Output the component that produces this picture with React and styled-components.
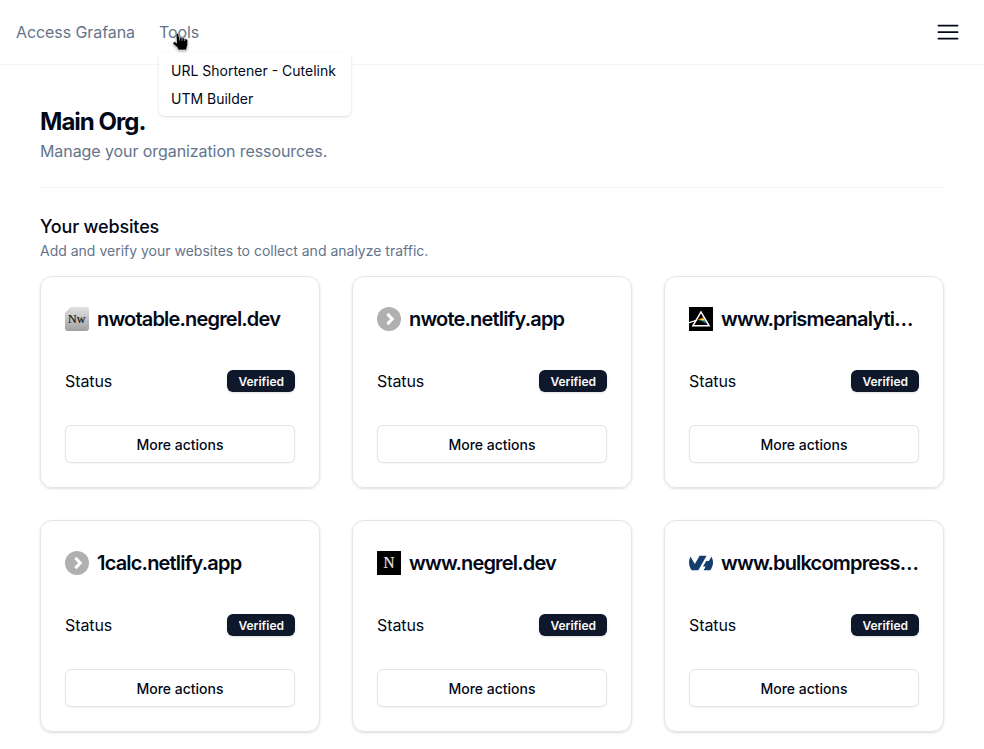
import React from "react";
import styled, { createGlobalStyle } from "styled-components";
import { SiOvh } from "react-icons/si";

const GlobalStyle = createGlobalStyle`
  *, *::before, *::after { box-sizing: border-box; }
  body {
    margin: 0;
    background: #fff;
    color: #020817;
    font-family: Inter, "Liberation Sans", sans-serif;
    font-size: 16px;
    line-height: 24px;
    letter-spacing: -0.08px;
  }
  h1, h2, h3, p { margin: 0; }
`;

const Header = styled.header`
  display: flex;
  align-items: center;
  justify-content: space-between;
  height: 65px;
  padding: 0 22px 0 16px;
  border-bottom: 1px solid #f1f5f9;
`;

const Nav = styled.nav`
  display: flex;
  gap: 24px;
  color: #64748b;
`;

const NavItem = styled.div`
  position: relative;
  cursor: pointer;
`;

const Menu = styled.div`
  position: absolute;
  z-index: 1;
  top: 32px;
  left: 0;
  width: 192px;
  padding: 5px 4px 3px;
  border-radius: 6px;
  background: #fff;
  color: #020817;
  box-shadow: 0 1px 3px rgba(0, 0, 0, 0.12), 0 1px 2px -1px rgba(0, 0, 0, 0.1);
`;

const MenuItem = styled.div`
  padding: 4px 8px;
  font-size: 14px;
  line-height: 20px;
  letter-spacing: 0;
  white-space: nowrap;
`;

const Pointer = styled.svg`
  position: absolute;
  z-index: 2;
  left: 13px;
  top: 12px;
  width: 18px;
  height: 20px;
  filter: drop-shadow(0 1px 1px rgba(0, 0, 0, 0.35));
`;

const MenuButton = styled.button`
  display: flex;
  padding: 0;
  border: 0;
  background: none;
  color: #020817;
`;

const Main = styled.main`
  padding: 41px 40px 40px;
`;

const PageTitle = styled.h1`
  font-size: 24px;
  line-height: 32px;
  font-weight: 700;
  letter-spacing: -0.98px;
`;

const PageIntro = styled.p`
  margin-top: 1px;
  color: #64748b;
`;

const Divider = styled.div`
  height: 1px;
  margin: 24px 0 25px;
  background: #f1f5f9;
`;

const SectionTitle = styled.h2`
  font-size: 18px;
  line-height: 28px;
  font-weight: 500;
  letter-spacing: -0.16px;
`;

const SectionIntro = styled.p`
  font-size: 14px;
  line-height: 20px;
  letter-spacing: 0;
  color: #64748b;
`;

const CardGrid = styled.section`
  display: grid;
  grid-template-columns: repeat(3, minmax(0, 1fr));
  gap: 32px;
  margin-top: 15px;
`;

const Card = styled.article`
  display: flex;
  flex-direction: column;
  height: 212px;
  padding: 24px;
  border: 1px solid #e4e4e7;
  border-radius: 12px;
  box-shadow: 0 1px 3px rgba(0, 0, 0, 0.1), 0 1px 2px -1px rgba(0, 0, 0, 0.1);
`;

const CardHeading = styled.div`
  display: flex;
  align-items: center;
  gap: 8px;
  height: 36px;

  svg { flex: none; }
`;

const Domain = styled.h3`
  white-space: nowrap;
  font-size: 20px;
  line-height: 28px;
  font-weight: 600;
  letter-spacing: -0.82px;
`;

const StatusRow = styled.div`
  display: flex;
  align-items: center;
  justify-content: space-between;
  margin-top: 32px;
`;

const Badge = styled.span`
  padding: 4px 11px 2px;
  border-radius: 6px;
  background: #0f172a;
  color: #f8fafc;
  font-size: 12px;
  line-height: 16px;
  font-weight: 600;
  letter-spacing: 0;
  box-shadow: 0 1px 3px rgba(0, 0, 0, 0.1), 0 1px 2px -1px rgba(0, 0, 0, 0.1);
`;

const ActionButton = styled.button`
  height: 38px;
  margin-top: auto;
  padding: 2px 0 0;
  border: 1px solid #e4e4e7;
  border-radius: 6px;
  background: #fff;
  color: #020817;
  font: 500 14px/20px Inter, "Liberation Sans", sans-serif;
  box-shadow: 0 1px 2px rgba(0, 0, 0, 0.05);
`;

const LogoText = styled.text`
  font-family: "Liberation Serif", serif;
  font-weight: 400;
  letter-spacing: 0;
  text-anchor: middle;
`;

const NwotableLogo = () => (
  <svg width="24" height="24" viewBox="0 0 24 24">
    <defs>
      <linearGradient id="paper" x1="0" y1="0" x2="0" y2="1">
        <stop offset="0" stopColor="#e2e2e2" />
        <stop offset="1" stopColor="#a0a0a0" />
      </linearGradient>
    </defs>
    <path d="M6 0H21Q24 0 24 3V21Q24 24 21 24H3Q0 24 0 21V6Z" fill="url(#paper)" />
    <path d="M6 0V4Q6 6 4 6H0Z" fill="#d2d2d2" />
    <LogoText x="11.8" y="15.5" fontSize="12" textLength="17.4" fill="#111" stroke="#111" strokeWidth="0.15">Nw</LogoText>
  </svg>
);

const ArrowLogo = () => (
  <svg width="24" height="24" viewBox="0 0 24 24" fill="none">
    <circle cx="12" cy="12" r="12" fill="#b0b0b0" />
    <path d="M10.4 6.9 15.2 12 10.4 17.1" stroke="#fff" strokeWidth="3" />
  </svg>
);

const PrismLogo = () => (
  <svg width="24" height="24" viewBox="0 0 24 24" fill="none">
    <path d="M0 0H24V24H0Z" fill="#000" />
    <path d="M9 12.4 14.2 10 15 11.6Z" fill="#f04a25" />
    <path d="M8.5 13 14.9 11.2 15.8 13.2Z" fill="#f5e735" />
    <path d="M10 13H15.8L16.8 15.2Z" fill="#43bf54" />
    <path d="M12 13.8 16.6 14.6 17.8 17Z" fill="#6246d8" />
    <path d="M12 4.9 3.9 18.8H20.1Z" stroke="#fff" strokeWidth="1.5" />
    <path d="M0 15.7 8 13.2" stroke="#fff" strokeWidth="1.3" />
  </svg>
);

const NegrelLogo = () => (
  <svg width="24" height="24" viewBox="0 0 24 24">
    <path d="M0 0H24V24H0Z" fill="#000" />
    <LogoText x="12" y="17.4" fontSize="16.5" textLength="11" lengthAdjust="spacingAndGlyphs" fill="#e4e4e4" stroke="#e4e4e4" strokeWidth="0.2">N</LogoText>
  </svg>
);

const OvhLogo = () => <SiOvh size={24} color="#123f6d" />;

const websites = [
  { domain: "nwotable.negrel.dev", Logo: NwotableLogo },
  { domain: "nwote.netlify.app", Logo: ArrowLogo },
  { domain: "www.prismeanalyti…", Logo: PrismLogo },
  { domain: "1calc.netlify.app", Logo: ArrowLogo },
  { domain: "www.negrel.dev", Logo: NegrelLogo },
  { domain: "www.bulkcompress…", Logo: OvhLogo },
];

export default function App() {
  return (
    <>
      <GlobalStyle />
      <Header>
        <Nav>
          <NavItem>Access Grafana</NavItem>
          <NavItem>
            Tools
            <Menu>
              <MenuItem>URL Shortener - Cutelink</MenuItem>
              <MenuItem>UTM Builder</MenuItem>
            </Menu>
            <Pointer viewBox="0 0 18 20">
              <path
                d="M4 2Q5.2.4 6.6 2L7.2 5.4Q8.7 4.7 9.8 6Q11.3 5.3 12.5 6.7Q15 6.3 15.7 8.3V12.5L14.3 18H6.2L5.3 15.5L1 11.8Q.6 9.5 3 9.7L4.7 11Z"
                fill="#000"
                stroke="#fff"
                strokeWidth="0.6"
                strokeLinejoin="round"
              />
              <path d="M7.6 6V8.5M10.1 6.5V8.7M12.7 7.2V9" stroke="#fff" strokeWidth="0.6" />
            </Pointer>
          </NavItem>
        </Nav>
        <MenuButton aria-label="Open menu">
          <svg width="28" height="28" viewBox="0 0 28 28" fill="none" stroke="currentColor" strokeWidth="1.75" strokeLinecap="round">
            <path d="M4.4 7.5H23.6M4.4 14H23.6M4.4 20.5H23.6" />
          </svg>
        </MenuButton>
      </Header>
      <Main>
        <PageTitle>Main Org.</PageTitle>
        <PageIntro>Manage your organization ressources.</PageIntro>
        <Divider />
        <SectionTitle>Your websites</SectionTitle>
        <SectionIntro>Add and verify your websites to collect and analyze traffic.</SectionIntro>
        <CardGrid>
          {websites.map(({ domain, Logo }) => (
            <Card key={domain}>
              <CardHeading>
                <Logo />
                <Domain>{domain}</Domain>
              </CardHeading>
              <StatusRow>
                Status
                <Badge>Verified</Badge>
              </StatusRow>
              <ActionButton>More actions</ActionButton>
            </Card>
          ))}
        </CardGrid>
      </Main>
    </>
  );
}
